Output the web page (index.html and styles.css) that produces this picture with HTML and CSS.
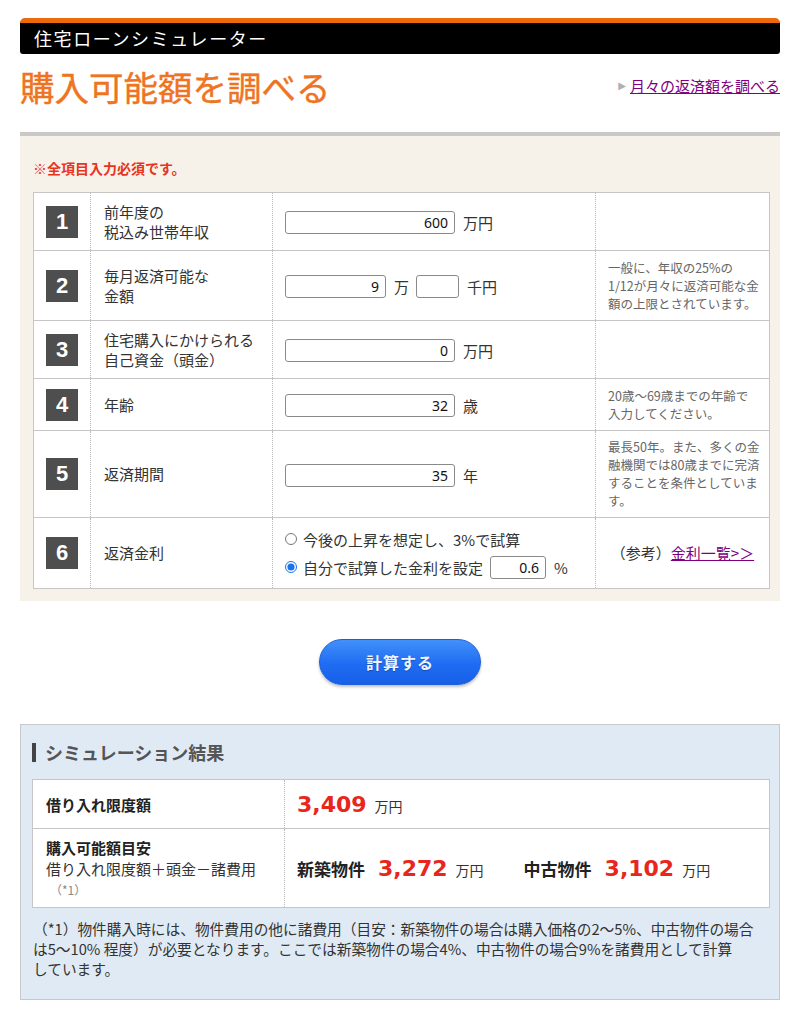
FILE: index.html
```html
<!DOCTYPE html>
<html lang="ja">
<head>
<meta charset="utf-8">
<title>住宅ローンシミュレーター</title>
<link rel="stylesheet" href="styles.css">
</head>
<body>
<div class="page">
  <div class="app-bar">住宅ローンシミュレーター</div>

  <div class="title-row">
    <h1 class="page-title">購入可能額を調べる</h1>
    <a class="sub-link" href="#"><span class="tri">▶</span><span class="sub-link-text">月々の返済額を調べる</span></a>
  </div>

  <section class="form-area">
    <p class="required">※全項目入力必須です。</p>
    <table class="form-table">
      <colgroup>
        <col class="c-num"><col class="c-label"><col class="c-field"><col class="c-note">
      </colgroup>
      <tr class="row-58">
        <td class="num"><span class="badge">1</span></td>
        <td class="label">前年度の<br>税込み世帯年収</td>
        <td class="field"><input class="inp inp-l" type="text" value="600"><span class="unit">万円</span></td>
        <td class="note"></td>
      </tr>
      <tr class="row-70">
        <td class="num"><span class="badge">2</span></td>
        <td class="label">毎月返済可能な<br>金額</td>
        <td class="field"><input class="inp inp-m" type="text" value="9"><span class="unit">万</span><input class="inp inp-s gap" type="text" value=""><span class="unit">千円</span></td>
        <td class="note">一般に、年収の25%の<br>1/12が月々に返済可能な金<br>額の上限とされています。</td>
      </tr>
      <tr class="row-58">
        <td class="num"><span class="badge">3</span></td>
        <td class="label">住宅購入にかけられる<br>自己資金（頭金）</td>
        <td class="field"><input class="inp inp-l" type="text" value="0"><span class="unit">万円</span></td>
        <td class="note"></td>
      </tr>
      <tr class="row-52">
        <td class="num"><span class="badge">4</span></td>
        <td class="label">年齢</td>
        <td class="field"><input class="inp inp-l" type="text" value="32"><span class="unit">歳</span></td>
        <td class="note">20歳～69歳までの年齢で<br>入力してください。</td>
      </tr>
      <tr class="row-87">
        <td class="num"><span class="badge">5</span></td>
        <td class="label">返済期間</td>
        <td class="field"><input class="inp inp-l" type="text" value="35"><span class="unit">年</span></td>
        <td class="note">最長50年。また、多くの金<br>融機関では80歳までに完済<br>することを条件としていま<br>す。</td>
      </tr>
      <tr class="row-71">
        <td class="num"><span class="badge">6</span></td>
        <td class="label">返済金利</td>
        <td class="field">
          <label class="radio-line"><input class="radio" type="radio" name="rate">今後の上昇を想定し、3%で試算</label>
          <label class="radio-line"><input class="radio" type="radio" name="rate" checked>自分で試算した金利を設定<input class="inp inp-r gap" type="text" value="0.6"><span class="unit">%</span></label>
        </td>
        <td class="note note-ref">（参考）<a href="#">金利一覧&gt;＞</a></td>
      </tr>
    </table>
  </section>

  <div class="btn-row">
    <button class="calc-btn" type="button">計算する</button>
  </div>

  <section class="result-box">
    <h2 class="result-title">シミュレーション結果</h2>
    <table class="result-table">
      <colgroup><col class="rc-label"><col class="rc-value"></colgroup>
      <tr class="r-limit">
        <td class="r-label"><strong>借り入れ限度額</strong></td>
        <td class="r-value"><span class="amount">3,409</span><span class="yen">万円</span></td>
      </tr>
      <tr class="r-buy">
        <td class="r-label">
          <strong class="r-line">購入可能額目安</strong>
          <span class="r-line">借り入れ限度額＋頭金－諸費用</span>
          <span class="r-line r-ref">（*1）</span>
        </td>
        <td class="r-value">
          <div class="pair">
            <span class="kind">新築物件</span><span class="amount">3,272</span><span class="yen">万円</span>
            <span class="kind kind-2">中古物件</span><span class="amount">3,102</span><span class="yen">万円</span>
          </div>
        </td>
      </tr>
    </table>
    <p class="footnote">（*1）物件購入時には、物件費用の他に諸費用（目安：新築物件の場合は購入価格の2～5%、中古物件の場合は5～10% 程度）が必要となります。ここでは新築物件の場合4%、中古物件の場合9%を諸費用として計算<span class="nobr">しています。</span></p>
  </section>
</div>
</body>
</html>
```

FILE: styles.css
```css
* { box-sizing: border-box; }

body {
  margin: 0;
  background: #fff;
  color: #333;
  font-family: "Noto Sans CJK JP", "Noto Sans", sans-serif;
}

.page {
  width: 760px;
  margin: 18px auto 0;
}

/* header bar */
.app-bar {
  height: 36px;
  border-top: 5px solid #ec6a0c;
  border-radius: 5px 5px 3px 3px;
  background: #000;
  color: #fff;
  font-size: 18px;
  line-height: 30px;
  letter-spacing: 1.6px;
  padding-left: 14px;
}

/* title */
.title-row {
  display: flex;
  justify-content: space-between;
  align-items: center;
  padding: 13px 0 27px;
}
.page-title {
  margin: 0;
  font-size: 34.5px;
  line-height: 38px;
  font-weight: 400;
  color: #ef7421;
  -webkit-text-stroke: 0.4px #ef7421;
}
.sub-link {
  display: flex;
  align-items: center;
  text-decoration: none;
  font-size: 15px;
  line-height: 20px;
}
.tri {
  color: #b0b0b0;
  font-size: 10px;
  margin-right: 4px;
  font-family: "DejaVu Sans", sans-serif;
}
.sub-link-text {
  color: #800080;
  text-decoration: underline;
}

/* form */
.form-area {
  border-top: 4px solid #c9c9c9;
  background: #f6f2ea;
  padding: 22px 11px 12px 13px;
}
.required {
  margin: 0 0 14px;
  color: #e8341f;
  font-size: 14px;
  font-weight: bold;
  line-height: 20px;
}
.form-table {
  width: 736px;
  border-collapse: collapse;
  background: #fff;
  border: 1px solid #c6c6c6;
  table-layout: fixed;
}
.c-num { width: 57px; }
.c-label { width: 182px; }
.c-field { width: 323px; }
.c-note { width: 174px; }

.row-58 { height: 58px; }
.row-70 { height: 70px; }
.row-52 { height: 52px; }
.row-87 { height: 87px; }
.row-71 { height: 71px; }

.form-table td {
  border-top: 1px solid #c6c6c6;
  border-bottom: 1px solid #c6c6c6;
  border-left: 1px dotted #b8b8b8;
  vertical-align: middle;
  padding: 6px 12px;
}
.form-table td.num {
  padding: 0;
  text-align: center;
}
.badge {
  display: inline-block;
  width: 32px;
  height: 32px;
  background: #4e4e4e;
  color: #fff;
  font-family: "Liberation Sans", Arial, sans-serif;
  font-weight: bold;
  font-size: 22px;
  line-height: 32px;
  text-align: center;
  vertical-align: middle;
}
.form-table td.label {
  padding-left: 13px;
  font-size: 15px;
  line-height: 20px;
  color: #333;
}
.form-table td.field {
  font-size: 15px;
  line-height: 23px;
  white-space: nowrap;
}
.inp {
  height: 23px;
  border: 1px solid #8a8a8a;
  border-radius: 3px;
  background: #fff;
  padding: 0 6px;
  text-align: right;
  font-family: "Noto Sans", "Noto Sans CJK JP", sans-serif;
  font-size: 14px;
  color: #111;
  vertical-align: middle;
}
.inp-l { width: 170px; }
.inp-m { width: 101px; }
.inp-s { width: 43px; }
.inp-r { width: 56px; }
.inp.gap { margin-left: 7px; }
.unit {
  margin-left: 8px;
  vertical-align: middle;
}
.form-table td.note {
  padding: 6px 8px 6px 12px;
  font-size: 12.5px;
  line-height: 18px;
  color: #666;
}
.form-table td.note-ref {
  text-align: center;
  font-size: 15px;
  color: #333;
  padding: 0;
}
.note-ref a { color: #800080; }

.radio-line {
  display: flex;
  align-items: center;
  height: 28px;
}
.radio {
  width: 12px;
  height: 12px;
  margin: 0 6px 0 0;
  accent-color: #1a73e8;
}

/* button */
.btn-row {
  display: flex;
  justify-content: center;
  padding: 38px 0 39px;
}
.calc-btn {
  width: 162px;
  height: 46px;
  border: 1px solid #1c5fdc;
  border-radius: 23px;
  background: linear-gradient(#4290fb, #1f6cf2 55%, #175fe8);
  box-shadow: 0 2px 3px rgba(0, 0, 0, 0.25);
  color: #eef4ff;
  font-family: "Noto Sans CJK JP", sans-serif;
  font-weight: bold;
  font-size: 16px;
  letter-spacing: 1px;
  text-shadow: 0 1px 1px rgba(0, 0, 0, 0.25);
}

/* result */
.result-box {
  border: 1px solid #c8c8c8;
  background: #e0eaf4;
  padding: 0 9px 20px 11px;
}
.result-title {
  display: flex;
  align-items: center;
  height: 54px;
  margin: 0;
  font-size: 18px;
  font-weight: bold;
  color: #555;
}
.result-title::before {
  content: "";
  width: 4px;
  height: 19px;
  background: #444;
  margin-right: 9px;
}
.result-table {
  width: 738px;
  border-collapse: collapse;
  background: #fff;
  border: 1px solid #c6c6c6;
  table-layout: fixed;
}
.rc-label { width: 252px; }
.result-table td {
  border-top: 1px solid #c6c6c6;
  border-left: 1px dotted #b8b8b8;
  vertical-align: middle;
  padding: 0 12px;
}
.r-limit { height: 49px; }
.r-buy { height: 79px; }
.result-table td.r-label {
  padding-left: 13px;
  font-size: 15px;
  line-height: 21px;
  color: #333;
}
.r-label strong { color: #222; }
.r-line { display: block; }
.r-ref {
  font-size: 12px;
  color: #888;
  padding-left: 4px;
}
.r-value {
  white-space: nowrap;
}
.pair {
  display: flex;
  align-items: baseline;
}
.kind {
  font-size: 17px;
  font-weight: bold;
  color: #222;
  margin-right: 13px;
}
.kind-2 { margin-left: 40px; }
.amount {
  font-family: "DejaVu Sans", Verdana, sans-serif;
  font-weight: bold;
  font-size: 22px;
  color: #e8261c;
}
.yen {
  font-size: 14px;
  margin-left: 8px;
  color: #333;
}
.footnote {
  margin: 11px 0 0;
  padding: 0 2px 0 1px;
  font-size: 14.7px;
  line-height: 20px;
  color: #333;
}
.nobr { white-space: nowrap; }
```
